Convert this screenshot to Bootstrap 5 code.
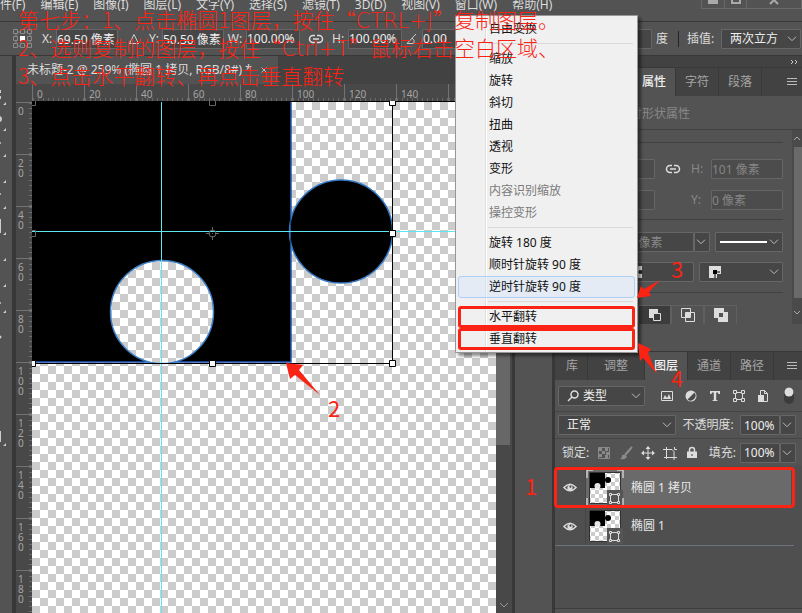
<!DOCTYPE html>
<html lang="zh-CN">
<head>
<meta charset="utf-8">
<meta name="viewport" content="width=device-width, initial-scale=1">
<title>未标题-2 @ 259%</title>
<link href="https://cdn.jsdelivr.net/npm/bootstrap@5.3.0/dist/css/bootstrap.min.css" rel="stylesheet">
<style>
:root{--pn:#535353;--dk:#424242;--ed:#383838;--fld:#464646;--bd:#666;--red:#fa2314}
body{font:12px/16px "Noto Sans","Noto Sans CJK SC",sans-serif;color:#dcdcdc;background:var(--pn)}
button,input,select{font:inherit;color:inherit}
svg{display:block;flex:none}
.ico{width:16px;height:16px}
.bare{background:none;border:0;padding:0}
.topmenu{height:21px;gap:15px}
.topmenu a{color:#dcdcdc;text-decoration:none;margin-top:-3px;white-space:nowrap}
.winbtns{right:0;top:0;height:9px;width:101px;border:1px solid #686868;border-top:0}
.winbtns button+button{border-left:1px solid #686868}
.optbar{height:35px;border-top:1px solid var(--ed);border-bottom:1px solid var(--ed);padding:0 1px 0 12px;display:grid;align-items:center;
 grid-template-columns:30px 14px 62px 31px 13px 62px 22px 54px 32px 16px 54px 20px 1fr 26px 43px 80px}
.fld{height:20px;min-width:0;width:100%;background:var(--fld);border:1px solid var(--bd);border-radius:1px;padding:0;color:#eee;line-height:18px}
.fld:disabled{color:#858585;background:#4c4c4c;opacity:1}
.drop{appearance:none;padding:0 16px 0 8px;background-image:url("data:image/svg+xml,%3Csvg xmlns='http://www.w3.org/2000/svg' width='10' height='6'%3E%3Cpath d='M1 .7l4 4 4-4' fill='none' stroke='%23bbb'/%3E%3C/svg%3E");background-repeat:no-repeat;background-position:right 3px center}
.toolstrip{width:12px}
.gutter{width:4px;background:var(--ed)}
.doctabs{height:28px;background:var(--dk)}
.doctab{background:var(--pn);width:262px;padding-left:11px;color:#ddd;white-space:nowrap}
.rul{background:#484848;color:#a5a5a5;font-size:10px;overflow:hidden}
.hrul{height:17px;padding-left:16px}
.hrul span{flex:none;width:52px;height:17px;line-height:20px;padding-left:4px;border-left:1px solid #737373;background:repeating-linear-gradient(90deg,#6a6a6a 0 1px,transparent 1px 5px) 0 100%/100% 3px no-repeat}
.vrul{width:16px;padding-top:1px}
.vrul span{display:block;flex:none;height:52px;width:16px;padding:3px 9px 0 2px;text-align:center;line-height:10px;border-top:1px solid #737373;background:repeating-linear-gradient(180deg,#6a6a6a 0 1px,transparent 1px 5px) 100% 0/3px 100% no-repeat}
.sbar{width:16px;background:#484848;padding-top:46px}
.sbar .thumb{flex:0 0 343px;width:14px;background:#676767}
.midrail{width:40px;border-left:3px solid var(--ed)}
.dock{width:250px;border-left:3px solid var(--ed)}
.strip{height:12px;background:var(--dk);border-bottom:1px solid var(--ed)}
.ptabs{background:var(--dk);height:28px}
.ptabs button{background:none;border:0;border-right:1px solid #383838;color:#a5a5a5;padding:0 9px;height:28px}
.ptabs button.on{background:var(--pn);color:#f0f0f0;font-weight:500}
.prophead{padding-left:78px}
.propttl{padding:10px 0 7px 63px}
.propbody{height:195px}
.propmain{padding:12px 9px 0 4px}
.propscroll{width:10px;background:#4a4a4a}
.propscroll .thumb{flex:0 0 151px;width:8px;margin-left:2px;background:#6a6a6a}
.sep{border-top:1px solid #414141}
.dim{color:#888}
.g1{display:grid;grid-template-columns:1fr 36px 20px 72px;align-items:center;row-gap:11px;padding:16px 0 9px}
.g2{display:grid;grid-template-columns:1fr 16px 5px 68px}
.g3{display:grid;grid-template-columns:1fr 84px;column-gap:5px;padding-top:10px}
.g23{padding:12px 0 10px}
.pathbtns{padding:12px 0 0 46px}
.pathbtn{width:33px;height:20px;border:1px solid #606060;background:none;padding:0}
.pathbtn.on{background:#3c3c3c}
.laytabs{margin-top:27px;border-top:1px solid var(--ed);height:29px;padding-left:2px}
.lrow{height:27px;border-bottom:1px solid #454545;padding:0 6px 0 3px}
.lrow.tall{height:32px;padding-right:0}
.fi{width:24px;height:20px}
.lk{width:22px;height:20px}
.fld.w87{width:87px;margin-right:10px}.fld.w118{width:118px}
.pct{width:56px}
.pct .fld:first-child{padding-left:3px}
.pct .fld:last-child{flex:0 0 16px;padding:0}
.lay{height:39px}
.lay .eye{width:31px;border-right:1px solid #454545}
.lay .nm{padding-left:1px;gap:8px;margin-right:3px;color:#e8e8e8}
.lay.sel .nm{background:#6a6a6a}
.lay.sel{outline:3px solid var(--red);outline-offset:-2px;border-radius:3px}
.laylist{margin-right:8px;padding-top:2px}
.layarea{background:#4f4f4f;border-bottom:1px solid #3e3e3e;margin-bottom:4px}
.cmenu{left:455px;top:15px;width:183px;background:#f0f0f0 linear-gradient(90deg,transparent 29px,#dedede 29px 30px,#fff 30px 31px,transparent 31px);color:#111;border:1px solid #979797;padding:2px;box-shadow:3px 3px 3px rgba(0,0,0,.45)}
.cmenu button{display:block;width:100%;height:22px;border:1px solid transparent;background:none;text-align:left;padding:0 0 0 30px;border-radius:3px;line-height:20px}
.cmenu button:disabled{color:#7a7a7a}
.cmenu button.hot{border-color:#aecff7;background:rgba(215,230,250,.5)}
.cmenu button.ring{outline:3px solid var(--red);outline-offset:-3px}
.cmenu hr{margin:3px 2px 4px 30px;border:0;border-top:1px solid #d8d8d8;opacity:1}
.note{left:18px;top:5px;font:300 21px/28px "Noto Sans CJK SC",sans-serif;color:var(--red);white-space:nowrap;pointer-events:none}
.note span{font-family:"DejaVu Sans",sans-serif;line-height:20px}
.marks{left:0;top:0;pointer-events:none;fill:var(--red);font:400 22px "Noto Sans CJK SC",sans-serif}
</style>
<script src="https://cdn.jsdelivr.net/npm/bootstrap@5.3.0/dist/js/bootstrap.bundle.min.js"></script>
</head>
<body class="vh-100 overflow-hidden d-flex flex-column position-relative">
<svg width="0" height="0" class="position-absolute">
 <symbol id="link" viewBox="0 0 16 16"><path d="M7 4.500H5a3 3 0 0 0 0 7h2M9 4.500h2a3 3 0 0 1 0 7H9M5 8h6" stroke="#ddd" stroke-width="1.500" fill="none"/></symbol>
 <symbol id="burger" viewBox="0 0 12 10"><path d="M1 1.500h10M1 4.500h10M1 7.500h10" stroke="#bbb"/></symbol>
 <symbol id="eye" viewBox="0 0 16 12"><path d="M1 6Q8-1.500 15 6Q8 13.500 1 6Z" fill="none" stroke="#ddd" stroke-width="1.600"/><circle cx="8" cy="6" r="3" fill="#ddd"/><circle cx="8.500" cy="5" r="1.200" fill="#444"/></symbol>
 <pattern id="mini" width="8" height="8" patternUnits="userSpaceOnUse"><path d="M0 0h8v8H0z" fill="#fff"/><path d="M4 0h4v4H4zM0 4h4v4H0z" fill="#ccc"/></pattern>
 <symbol id="layerpic" viewBox="0 0 36 36"><path d="M2.500 2.500h31v31h-31z" fill="url(#mini)" stroke="#333"/><path d="M3 3h15v15H3z"/><circle cx="21" cy="10" r="3"/><circle cx="10.500" cy="16" r="3" fill="#e5e5e5"/><path d="M20 20h16v16H20z" fill="#555"/><path d="M23.500 24.500h8v8h-8z" fill="none" stroke="#ddd"/><path d="M22.500 23.500h2v2h-2zM30.500 23.500h2v2h-2zM22.500 31.500h2v2h-2zM30.500 31.500h2v2h-2z" fill="#555" stroke="#ddd"/></symbol>
</svg>

<nav class="topmenu d-flex align-items-start position-relative flex-shrink-0">
 <a href="#">件(F)</a><a href="#">编辑(E)</a><a href="#">图像(I)</a><a href="#">图层(L)</a><a href="#">文字(Y)</a><a href="#">选择(S)</a><a href="#">滤镜(T)</a><a href="#">3D(D)</a><a href="#">视图(V)</a><a href="#">窗口(W)</a><a href="#">帮助(H)</a>
 <div class="winbtns position-absolute d-flex">
  <button class="bare flex-fill" aria-label="最小化"><svg class="mx-auto" width="12" height="8"><path d="M1 0h10v4H1z" fill="#aaa"/></svg></button>
  <button class="bare flex-fill" aria-label="还原"><svg class="mx-auto" width="12" height="8"><path d="M2 0v3h8V0" fill="none" stroke="#aaa" stroke-width="2"/></svg></button>
  <button class="bare flex-fill px-3" aria-label="关闭"><svg class="mx-auto" width="12" height="8"><path d="M2 4l4-4 4 4" fill="none" stroke="#aaa" stroke-width="2"/></svg></button>
 </div>
</nav>

<div class="optbar flex-shrink-0">
 <svg width="22" height="22" fill="none" stroke="#8a8a8a"><path d="M6 4h2M13 4h2M6 18h2M13 18h2M4 6v2M4 13v2M18 6v2M18 13v2"/><path d="M1.500 1.500h4v4h-4zM8.500 1.500h4v4h-4zM15.500 1.500h4v4h-4zM1.500 8.500h4v4h-4zM15.500 8.500h4v4h-4zM1.500 15.500h4v4h-4zM8.500 15.500h4v4h-4zM15.500 15.500h4v4h-4z"/><path d="M8 8h5v5H8z" fill="#fff" stroke="none"/></svg>
 <label for="fx">X:</label><input id="fx" class="fld" value="69.50 像素">
 <svg class="mx-auto" width="12" height="12"><path d="M6 1.500l4.500 9h-9z" fill="none" stroke="#ccc"/></svg>
 <label for="fy">Y:</label><input id="fy" class="fld" value="50.50 像素">
 <label for="fw" class="text-center">W:</label><input id="fw" class="fld" value="100.00%">
 <svg class="ico mx-auto"><use href="#link"/></svg>
 <label for="fh">H:</label><input id="fh" class="fld" value="100.00%">
 <svg class="mx-auto" width="14" height="12"><path d="M11 1L2 10.500h11M7 5q3 2 2 5.500" fill="none" stroke="#ccc"/></svg>
 <input class="fld" aria-label="旋转角度" value="0.00">
 <span class="ps-1">度</span>
 <label for="interp" class="border-start border-dark ps-2 text-nowrap">插值:</label>
 <select id="interp" class="fld drop"><option>两次立方</option></select>
</div>

<div class="d-flex flex-grow-1 overflow-hidden">
 <div class="toolstrip flex-shrink-0"><svg width="12" height="100%"><g fill="#ccc"><path d="M6 46v3H3zM6 72v3H3zM6 98v3H3zM6 124v3H3zM6 150v3H3zM6 176v3H3zM6 202v3H3zM6 228v3H3zM6 254v3H3zM6 387v3H3z"/><path d="M0 34h1v3H0zM0 40h1v3H0zM0 163h1v14H0zM0 375h1v11H0z"/><circle cx="-1" cy="63" r="3"/><circle cx="0" cy="87" r="1"/><circle cx="0" cy="138" r="1"/><circle cx="0" cy="247" r="1"/><circle cx="0" cy="281" r="1.500"/></g></svg></div>
 <div class="gutter flex-shrink-0"></div>
 <div class="d-flex flex-column flex-grow-1 overflow-hidden">
  <div class="doctabs d-flex flex-shrink-0"><div class="doctab d-flex align-items-center"><span>未标题-2 @ 259% (椭圆 1 拷贝, RGB/8#) *</span><button class="bare ms-2" aria-label="关闭文档"><svg width="8" height="8"><path d="M1.500 1.500l5 5M6.500 1.500l-5 5" stroke="#bbb"/></svg></button></div></div>
  <div class="rul hrul d-flex flex-shrink-0"><span>0</span><span>20</span><span>40</span><span>60</span><span>80</span><span>100</span><span>120</span><span>140</span><span></span></div>
  <div class="d-flex flex-grow-1 overflow-hidden">
   <div class="rul vrul d-flex flex-column flex-shrink-0"><span>0</span><span>2 0</span><span>4 0</span><span>6 0</span><span>8 0</span><span>1 0 0</span><span>1 2 0</span><span>1 4 0</span><span>1 6 0</span><span>1 8 0</span></div>
   <div class="flex-grow-1 overflow-hidden">
    <svg width="100%" height="100%">
     <defs><pattern id="chk" y="1" width="16" height="16" patternUnits="userSpaceOnUse"><path d="M0 0h16v16H0z" fill="#fff"/><path d="M8 0h8v8H8zM0 8h8v8H0z" fill="#ccc"/></pattern></defs>
     <rect width="100%" height="100%" fill="url(#chk)"/>
     <path d="M0 0h259v261H0z"/><path d="M259 0v261H0" fill="none" stroke="#2456b8" stroke-width="1.500"/>
     <circle cx="130" cy="211" r="51.500" fill="url(#chk)" stroke="#3d80cc" stroke-width="1.500"/>
     <circle cx="309" cy="130.500" r="51.500" stroke="#3277c4" stroke-width="1.500"/>
     <path d="M258.500 90v80" stroke="#1c4f90"/>
     <g fill="#5ce6ee"><rect x="129" y="1" width="1" height="100%"/><rect y="130" width="100%" height="1"/></g>
     <path d="M0 .5h480M1 262.500h359.500V1" fill="none" stroke="#000"/>
     <g fill="#fff" stroke="#000"><path d="M357.500-1.500h6v6h-6zM357.500 129.500h6v6h-6zM357.500 259.500h6v6h-6zM177.500 259.500h6v6h-6zM-2.500 259.500h6v6h-6z"/></g>
     <g fill="none" stroke="#666"><path d="M177.500-1.500h6v6h-6zM-2.500-1.500h6v6h-6zM-2.500 129.500h6v6h-6z"/><circle cx="180.500" cy="132.500" r="3.500"/><path d="M180.500 126v4M180.500 135v4M174 132.500h4M183 132.500h4M180 132.500h1"/></g>
    </svg>
   </div>
  </div>
 </div>
 <div class="sbar d-flex flex-column flex-shrink-0"><div class="thumb"></div><svg class="mt-auto mx-auto mb-1" width="10" height="7"><path d="M1 1l4 4 4-4" stroke="#999" fill="none"/></svg></div>
 <div class="midrail flex-shrink-0"></div>
 <aside class="dock d-flex flex-column flex-shrink-0">
  <div class="strip d-flex justify-content-end flex-shrink-0 pe-1"><svg width="8" height="12"><path d="M1 4l2 2-2 2M5 4l2 2-2 2" stroke="#ccc" fill="none"/></svg></div>
  <div class="ptabs prophead d-flex align-items-center flex-shrink-0"><button class="on">属性</button><button>字符</button><button>段落</button><svg class="ms-auto me-1" width="12" height="10"><use href="#burger"/></svg></div>
  <div class="propttl dim flex-shrink-0">实时形状属性</div>
  <div class="propbody d-flex sep flex-shrink-0">
   <div class="propmain flex-grow-1 overflow-hidden">
    <div class="sep"></div>
    <div class="g1">
     <input class="fld" aria-label="宽度" disabled><svg class="ico mx-auto"><use href="#link"/></svg><label for="ph" class="dim">H:</label><input id="ph" class="fld" disabled value="101 像素">
     <input class="fld" aria-label="水平位置" disabled><span></span><label for="py" class="dim">Y:</label><input id="py" class="fld" disabled value="0 像素">
    </div>
    <div class="sep"></div>
    <div class="g23">
     <div class="g2"><input class="fld dim text-center ps-5" aria-label="描边宽度" value="像素"><button class="fld drop p-0" aria-label="选择描边宽度"></button><span></span><button class="fld drop p-0" aria-label="描边样式"><svg width="52" height="4"><path d="M4 2h47" stroke="#fff" stroke-width="2"/></svg></button></div>
     <div class="g3"><button class="fld d-flex justify-content-end align-items-center pe-5" aria-label="端点"><svg class="me-n2" width="14" height="14"><path d="M3 1h8v4H8v4h3v4H3z" fill="#ddd"/><path d="M1 5h5v4H1z"/><path d="M5 7h6" stroke="#000"/></svg></button><button class="fld drop d-flex align-items-center" aria-label="角点"><svg width="14" height="14"><path d="M1 1h12v8H9v4H1z" fill="#ddd"/><path d="M5 5h4v4H5z"/><path d="M7 7v6M7 7h5" stroke="#000"/></svg></button></div>
    </div>
    <div class="sep"></div>
    <div class="pathbtns d-flex">
     <button class="pathbtn on" aria-label="合并形状"><svg class="mx-auto" width="14" height="14"><path d="M1 1h8v8H1z" fill="#ddd"/></svg></button>
     <button class="pathbtn on" aria-label="减去顶层形状"><svg class="mx-auto" width="14" height="14"><path d="M1 1h9v9H1z" fill="#ddd"/><path d="M5.500 5.500h7v7h-7z" fill="#3c3c3c" stroke="#ddd"/></svg></button>
     <button class="pathbtn" aria-label="与形状区域相交"><svg class="mx-auto" width="14" height="14"><path d="M.5 .5h9v9h-9zM4.500 4.500h9v9h-9z" fill="none" stroke="#ddd"/><path d="M5 5h4v4H5z" fill="#ddd"/></svg></button>
     <button class="pathbtn" aria-label="排除重叠形状"><svg class="mx-auto" width="14" height="14"><path d="M0 0h10v4h4v10H4v-4H0zM5 5v4h4V5z" fill="#ddd" fill-rule="evenodd"/></svg></button>
    </div>
   </div>
   <div class="propscroll d-flex flex-column flex-shrink-0"><svg class="my-1 mx-auto" width="8" height="9"><path d="M1 6l3-3 3 3" stroke="#aaa" fill="none"/></svg><div class="thumb"></div><svg class="mt-auto mb-2 mx-auto" width="8" height="6"><path d="M1 1l3 3 3-3" stroke="#aaa" fill="none"/></svg></div>
  </div>
  <div class="ptabs laytabs d-flex align-items-center flex-shrink-0"><button>库</button><button class="px-3">调整</button><button class="on">图层</button><button>通道</button><button>路径</button><svg class="ms-auto me-1" width="12" height="10"><use href="#burger"/></svg></div>
  <div class="lrow tall d-flex align-items-center flex-shrink-0">
   <button class="fld drop w87 d-flex align-items-center gap-1 flex-shrink-0"><svg width="12" height="12"><circle cx="7.500" cy="4.500" r="3.500" fill="none" stroke="#ddd" stroke-width="1.500"/><path d="M5 7L1 11" stroke="#ddd" stroke-width="1.500"/></svg>类型</button>
   <button class="bare fi" aria-label="像素图层"><svg class="mx-auto" width="14" height="12"><path d="M1.500 1.500h11v9h-11z" fill="none" stroke="#ddd"/><path d="M3 9l2-4 2 3 2-4 2 5z" fill="#ddd"/></svg></button>
   <button class="bare fi" aria-label="调整图层"><svg class="mx-auto" width="14" height="14"><circle cx="7" cy="7" r="5.500" fill="#ddd"/><path d="M10.500 3.500A5 5 0 0 1 3.500 10.500z" fill="#4a4a4a"/></svg></button>
   <button class="bare fi" aria-label="文字图层"><svg class="mx-auto" width="12" height="12"><path d="M1 1h10v3H9.500L9 2.500H7.200V10l1.300.3V11h-5v-.7L4.800 10V2.500H3L2.500 4H1z" fill="#ddd"/></svg></button>
   <button class="bare fi" aria-label="形状图层"><svg class="mx-auto" width="14" height="14" stroke="#ddd" fill="none"><path d="M3.500 3.500h7v7h-7z"/><path d="M1.500 1.500h3v3h-3zM9.500 1.500h3v3h-3zM1.500 9.500h3v3h-3zM9.500 9.500h3v3h-3z" fill="#535353"/></svg></button>
   <button class="bare fi" aria-label="智能对象"><svg class="mx-auto" width="12" height="14"><path d="M3.500 6V1.500h4l3 3v8H7M7.500 1.500v3h3" fill="none" stroke="#ddd"/><path d="M1 6h6v7H1z" fill="#ddd"/></svg></button>
   <button class="bare ms-auto me-2" aria-label="图层过滤开关"><svg width="10" height="18"><rect width="10" height="17" rx="5" fill="#3c3c3c"/><circle cx="5" cy="5" r="4.500" fill="#ddd"/></svg></button>
  </div>
  <div class="lrow d-flex align-items-center justify-content-between flex-shrink-0">
   <select class="fld drop w118" aria-label="混合模式"><option>正常</option></select>
   <label for="op" class="text-nowrap">不透明度:</label><div class="pct d-flex"><input id="op" class="fld" value="100%"><button class="fld drop" aria-label="调整不透明度"></button></div>
  </div>
  <div class="lrow border-bottom-0 d-flex align-items-center flex-shrink-0">
   <span class="ps-1 pe-1">锁定:</span>
   <button class="bare lk" aria-label="锁定透明像素"><svg class="mx-auto" width="12" height="12"><path d="M.5.5h11v11H.5z" fill="none" stroke="#8a8a8a"/><path d="M1 1h3v3H1zM7 1h3v3H7zM4 4h3v3H4zM8 5h3v3H8zM1 7h3v3H1zM7 8h3v3H7z" fill="#8a8a8a"/></svg></button>
   <button class="bare lk" aria-label="锁定图像像素"><svg class="mx-auto" width="14" height="14"><path d="M13 1L6 9" stroke="#8a8a8a" stroke-width="2"/><path d="M1 13q2-1 2-3t3-1 1 3-6 1z" fill="#8a8a8a"/></svg></button>
   <button class="bare lk" aria-label="锁定位置"><svg class="mx-auto" width="14" height="14"><path d="M7 1v12M1 7h12" stroke="#ddd"/><path d="M7 0l2.500 3h-5zM7 14l2.500-3h-5zM0 7l3-2.500v5zM14 7l-3-2.500v5z" fill="#ddd"/></svg></button>
   <button class="bare lk" aria-label="防止自动嵌套"><svg class="mx-auto" width="14" height="14" fill="none" stroke="#ddd"><path d="M3.500 1v12M0 3.500h9l2 2V14M1 11.500h13M11.500 1v2.500H14"/></svg></button>
   <button class="bare lk" aria-label="锁定全部"><svg class="mx-auto" width="12" height="13"><path d="M1 5.500h10V12H1z" fill="#ddd"/><path d="M3.500 6V4a2.500 2.500 0 0 1 5 0v2" stroke="#ddd" stroke-width="1.500" fill="none"/><path d="M6 8v2" stroke="#444"/></svg></button>
   <label for="fl" class="ms-auto me-1">填充:</label><div class="pct d-flex"><input id="fl" class="fld" value="100%"><button class="fld drop" aria-label="调整填充"></button></div>
  </div>
  <div class="layarea flex-grow-1">
   <div class="laylist">
    <div class="lay sel d-flex"><button class="bare eye" aria-label="切换可见性"><svg class="mx-auto" width="14" height="11"><use href="#eye"/></svg></button><div class="nm d-flex align-items-center flex-grow-1"><svg class="overflow-visible" width="36" height="36"><use href="#layerpic"/><path d="M0 8V0h6M30 0h6v8M0 28v8h10M26 36h10v-8" fill="none" stroke="#fff"/></svg><span>椭圆 1 拷贝</span></div></div>
    <div class="lay d-flex border-bottom border-secondary"><button class="bare eye" aria-label="切换可见性"><svg class="mx-auto" width="14" height="11"><use href="#eye"/></svg></button><div class="nm d-flex align-items-center flex-grow-1"><svg width="36" height="36"><use href="#layerpic"/></svg><span>椭圆 1</span></div></div>
   </div>
  </div>
 </aside>
</div>

<div class="cmenu position-absolute">
 <button>自由变换</button><hr>
 <button>缩放</button><button>旋转</button><button>斜切</button><button>扭曲</button><button>透视</button><button>变形</button><button disabled>内容识别缩放</button><button disabled>操控变形</button><hr>
 <button>旋转 180 度</button><button>顺时针旋转 90 度</button><button class="hot">逆时针旋转 90 度</button><hr>
 <button class="ring">水平翻转</button><button class="ring">垂直翻转</button>
</div>
<div class="note position-absolute">第七步：1、点击椭圆1图层，按住“<span>CTRL+J</span>”复制图层。<br>2、选则复制的图层，按住“<span>Ctrl+T</span>”鼠标右击空白区域、<br>3、点击水平翻转、再点击垂直翻转</div>
<svg class="marks position-absolute" width="100%" height="100%">
 <text x="525" y="495">1</text><text x="328" y="417">2</text><text x="671" y="278">3</text><text x="671" y="387">4</text>
 <path d="M286 363L303 365L299 370L320 395L295 375L290 379Z"/>
 <path d="M637 298L641 286L644 289L660 280L649 292L651 296Z"/>
 <path d="M638 343L651 349L648 353L657 374L643 358L640 361Z"/>
</svg>
</body>
</html>
